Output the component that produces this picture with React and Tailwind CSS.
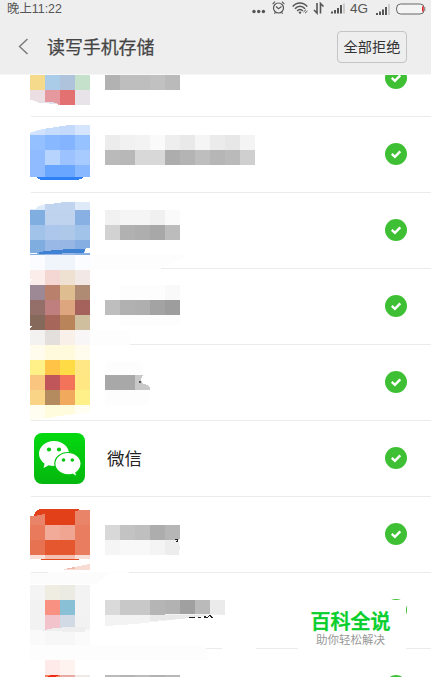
import React from 'react'

// Each entry is one line of 15px blocks: [x, y, colours, height]
const rows = [
    {
        top: 41,
        icon: [
            [30, 75, ['#f5da8b', '#abcce8', '#b0c3dc', '#c5e1cb']],
            [30, 90, ['#ebdfe3', '#e5989e', '#e37172', '#e8e3e8']],
        ],
        label: [[105, 75, ['#b2b2b2', '#bebebe', '#bebebe', '#c1c1c1', '#bababa'], 15]],
        marks: [['30,100 35,101 39,103 58,104 59,106 30,106', '#ffffff'], ['35,101 41,102 53,102 58,104 40,103', '#dfe2ec']],
    },
    {
        top: 117,
        icon: [
            [30, 125, ['#d0e2fd', '#c6dcfd', '#c3dafd', '#d5e5fe'], 10],
            [30, 135, ['#94c0ff', '#88b8ff', '#84b4ff', '#96c2ff']],
            [30, 150, ['#90bcff', '#b7d4ff', '#9cc3ff', '#a7caff']],
            [30, 165, ['#90bcff', '#68a6ff', '#68a6ff', '#88b8ff'], 12],
        ],
        label: [
            [105, 135, ['#ececec', '#f1f1f1', '#f3f3f3', '#fafafa', '#eeeeee', '#e9e9e9', '#f5f5f5', '#ebebeb', '#e7e7e7', '#f4f4f4']],
            [105, 150, ['#bababa', '#b8b8b8', '#d8d8d8', '#d8d8d8', '#adadad', '#b4b4b4', '#bebebe', '#b6b6b6', '#bababa', '#cfcfcf']],
        ],
        marks: [['30,125 69,125 56,127 43,129 35,131 30,133', '#ffffff'], ['36,177 84,177 81,179 77,180 41,180', '#2e80f5']],
    },
    {
        top: 193,
        icon: [
            [30, 202, ['#deeaf8', '#c0d4f0', '#c0d4f0', '#deeaf8'], 8],
            [30, 210, ['#80aee0', '#bfd3ef', '#bfd3ef', '#88b0e2']],
            [30, 225, ['#a2c3e9', '#acc6ec', '#aec8ea', '#a2c3e9']],
            [30, 240, ['#7fade0', '#99b8e6', '#98b6e4', '#85afe2']],
            [30, 255, ['#fafcff', '#f0f5fb', '#f0f5fb', '#fafcff']],
        ],
        label: [
            [105, 210, ['#f1f1f1', '#f5f5f5', '#f5f5f5', '#f0f0f0', '#fafafa']],
            [105, 225, ['#d2d2d2', '#b1b1b1', '#aeaeae', '#a8a8a8', '#bcbcbc']],
        ],
        marks: [
            ['30,202 61,202 61,203 46,204 39,206 35,209 30,209', '#ffffff'],
            ['37,253 45,251 69,249 85,249 84,253 40,254', '#3f82d4'],
            ['86,248 90,248 90,253 84,253', '#ffffff'],
            ['30,253 37,253 37,254 30,254', '#ffffff'],
            ['90,255 190,255 158,270 90,270', '#fdfdfd'],
        ],
    },
    {
        top: 269,
        icon: [
            [30, 270, ['#fbedea', '#f4d6d3', '#eee1d2', '#f2e8e5']],
            [30, 285, ['#9c8995', '#b9806b', '#debe91', '#af8b74']],
            [30, 300, ['#946e68', '#bf7f7e', '#dda67e', '#a5625d']],
            [30, 315, ['#85695b', '#a66659', '#b98459', '#cfbf9f']],
            [30, 330, ['#f3f2f1', '#e3dfdd', '#faf0ea', '#f8f6f7']],
        ],
        label: [
            [120, 285, ['#fdfdfd', '#fdfdfd', '#fdfdfd', '#f9f9f9']],
            [105, 300, ['#bebebe', '#b1b1b1', '#afafaf', '#a3a3a3', '#9d9d9d']],
            [120, 315, ['#fdfdfd', '#fdfdfd', '#fdfdfd', '#fdfdfd'], 11],
        ],
        marks: [['30,279 32,279 30,281', '#ffffff'], ['30,326 32,326 30,328', '#ffffff'], ['90,330 130,330 130,345 90,345', '#fdfdfd']],
    },
    {
        top: 345,
        icon: [
            [30, 345, ['#fffced', '#fffadc', '#fffadc', '#fffced']],
            [30, 360, ['#fff087', '#ffc348', '#ffdb45', '#ffe786']],
            [30, 375, ['#f9c57f', '#c05659', '#f27359', '#ffe884']],
            [30, 390, ['#fad486', '#b48a5f', '#f0a95d', '#fff08a']],
            [30, 405, ['#fffef0', '#fffbdd', '#fffbdd', '#fffef0']],
        ],
        label: [[105, 375, ['#a8a8a8', '#a8a8a8']]],
        marks: [
            ['90,412 90,420 35,420 60,416', '#ffffff'],
            ['105,361 138,361 143,366 143,375 105,375', '#fdfdfd'],
            ['105,390 150,390 149,402 143,405 105,405', '#fdfdfd'],
            ['135,375 143,375 141,379 142,383 147,385 150,388 150,390 135,390', '#c8c8c8'],
            ['139,381 141,381 141,383 139,383', '#555555'],
        ],
    },
    { top: 421, name: '微信' },
    {
        top: 497,
        icon: [
            [30, 510, ['#ea8468', '#e24019', '#e24019', '#ea8468']],
            [30, 525, ['#e97b5c', '#f1ab98', '#f0a592', '#e97d60']],
            [30, 540, ['#e67252', '#e5582f', '#e5582f', '#e87e5f']],
            [30, 555, ['#fadfd8', '#f4c0b2', '#f4c0b2', '#fadfd8'], 4],
        ],
        label: [
            [105, 525, ['#d8d8d8', '#c3c3c3', '#bfbfbf', '#adadad', '#b6b6b6']],
            [105, 540, ['#f5f5f5', '#f8f8f8', '#f8f8f8', '#f4f4f4', '#ededed']],
        ],
        marks: [
            ['30,509 45,509 45,514 30,516', '#ffffff'],
            ['34,516 35,513 37,510 41,509 77,509 81,510 75,511 75,514 45,514', '#e24019'],
            ['39,559 80,559 78,560 42,560', '#e24a20'],
            ['180,538 178,541 180,546 179,555 181,555 181,538', '#ffffff'],
            ['172,539 177,539 178,538 178,542 176,542 177,540', '#222222'],
            ['48,572 129,572 129,573 48,573', '#fdfdfd'],
            ['64,569 75,567 84,565 90,564 90,570 64,570', '#f8dcd4'],
            ['64,569 75,567 75,569', '#f2b9aa'],
        ],
    },
    {
        top: 573,
        icon: [
            [30, 585, ['#f4f4f4', '#efece1', '#ecebe3', '#f3f3f3']],
            [30, 600, ['#f2f2f2', '#f99182', '#8ac0d6', '#f3f3f3']],
            [30, 615, ['#f2f2f2', '#f2c3ca', '#d2dae5', '#f2f2f2']],
            [30, 630, ['#fafafa', '#f7f7f7', '#f7f7f7', '#fbfbfb']],
            [30, 645, ['#fdfdfd', '#fdfdfd', '#fdfdfd', '#fdfdfd']],
        ],
        label: [[105, 600, ['#dadada', '#c8c8c8', '#c8c8c8', '#b5b5b5', '#b2b2b2', '#a0a0a0', '#bababa', '#ebebeb']]],
        marks: [
            ['30,573 110,573 96,584 30,584', '#fcfcfc'],
            ['45,630 54,628 69,627 86,627 85,632 38,631', '#eeeeee'],
            ['105,615 225,614 180,619 135,624 105,626', '#f3f3f3'],
            ['150,615 210,615 180,619 150,621', '#e9e9e9'],
            ['189,617 195,617 195,618 189,618', '#222222'],
            ['198,617 201,617 201,618 198,618', '#222222'],
            ['204,616 207,617 210,615 213,618 211,618 209,616 207,618 204,618', '#222222'],
            ['90,645 200,645 208,650 208,660 90,660', '#fdfdfd'],
            ['222,647 256,647 256,650 222,650', '#ffffff'],
        ],
    },
    {
        top: 649,
        icon: [
            [45, 660, ['#feebe9', '#fff3f0']],
            [45, 675, ['#f3805f', '#e8aaa5', '#efe8e5'], 2],
        ],
        label: [[105, 675, ['#bababa', '#b4b4b4', '#bcbcbc', '#b2b2b2', '#b8b8b8'], 2]],
        marks: [['48,676 51,675 58,675 58,676 54,677 48,677', '#f02a12']],
    },
]

function Mosaic({ row }) {
    return (
        <svg className="h-[76px] w-[240px] shrink-0 overflow-visible" viewBox={`30 ${row.top} 240 76`} shapeRendering="crispEdges">
            {[...row.icon, ...row.label].map(([x, y, colors, height = 15]) =>
                colors.map((color, i) => (
                    <rect key={`${x}-${y}-${i}`} x={x + i * 15} y={y} width="15" height={height} fill={color} />
                ))
            )}
            {row.marks.map(([points, fill]) => (
                <polygon key={points} points={points} fill={fill} />
            ))}
        </svg>
    )
}

function WeChatIcon() {
    return (
        <svg className="h-[51px] w-[51px]" viewBox="0 0 51 51">
            <defs>
                <linearGradient id="wechat" x1="0" y1="0" x2="0" y2="1">
                    <stop offset="0" stopColor="#04d910" />
                    <stop offset="1" stopColor="#05b70e" />
                </linearGradient>
            </defs>
            <rect width="51" height="51" rx="8" fill="url(#wechat)" />
            <path d="M20 8C11.500 8 5 13.700 5 20.800c0 4 2.200 7.500 5.600 9.900L9.500 35l5.300-2.700c1.700.5 3.400.8 5.200.8 8.300 0 15-5.600 15-12.500S28.300 8 20 8z" fill="#fff" />
            <path d="M34 19.500c-7.300 0-13.200 4.900-13.200 11.100S26.700 41.800 34 41.800c1.500 0 3-.2 4.300-.6l4.700 2.500-1.100-4c3.200-2 5.200-5.300 5.200-9.100 0-6.200-5.800-11.100-13.100-11.100z" fill="#fff" stroke="#05c60f" strokeWidth="1.200" />
            <circle cx="15" cy="16.500" r="2.100" fill="#04cc10" />
            <circle cx="25" cy="16.500" r="2.100" fill="#04cc10" />
            <circle cx="29.500" cy="27" r="1.800" fill="#04c40f" />
            <circle cx="38.300" cy="27" r="1.800" fill="#04c40f" />
        </svg>
    )
}

function CheckIcon() {
    return (
        <svg className="h-[22px] w-[22px]" viewBox="0 0 22 22">
            <circle cx="11" cy="11" r="11" fill="#3fc034" />
            <path d="M6.800 10.900l3.100 3 5.400-5.600" fill="none" stroke="#fff" strokeWidth="2.400" />
        </svg>
    )
}

function Signal({ className }) {
    return (
        <svg className={className} viewBox="0 0 14 11">
            <path d="M0 11V9h2v2zM3 11V7.500h2V11zM6 11V5.500h2V11zM9 11V3h2v8z" fill="#555" />
            <path d="M12 11V0h2v11z" fill="#ccc" />
        </svg>
    )
}

function StatusBar() {
    return (
        <div className="flex h-[18px] items-center justify-between pl-[7px] pr-[5px] text-[12.400px] leading-none text-[#555]">
            <span>晚上11:22</span>
            <div className="flex items-center">
                <svg className="h-[18px] w-[94px]" viewBox="252 0 94 18" fill="none" stroke="#555">
                    <g fill="#555" stroke="none">
                        <circle cx="254" cy="11.500" r="1.700" />
                        <circle cx="258.700" cy="11.500" r="1.700" />
                        <circle cx="263.400" cy="11.500" r="1.700" />
                    </g>
                    <circle cx="278.500" cy="8" r="5" strokeWidth="1.200" />
                    <path d="M276 6.500l2.500 2.200 3-2.200M272.600 4.200l2.500-2.500M284.400 4.200l-2.500-2.500M275.500 12.300l-1.200 1.400M281.500 12.300l1.200 1.400" strokeWidth="1.100" />
                    <path d="M292.700 6.500c4-4.700 10.500-4.700 14.500 0M295 8.700c3-3.300 7-3.300 10 0M297.200 10.900c1.700-1.700 3.900-1.700 5.600 0" strokeWidth="1.600" />
                    <circle cx="300" cy="12.600" r="1.200" fill="#555" stroke="none" />
                    <path d="M303.500 12l2.500-2.300M305 13.200l2.500-2.300" strokeWidth="1" />
                    <path d="M317 3v10l-3-3M320.500 13.500V3.500l3 3" strokeWidth="1.600" />
                    <g stroke="none">
                        <path d="M331 13.500v-2h2v2zM334 13.500v-3.500h2v3.500zM337 13.500v-5.500h2v5.500zM340 13.500V5h2v8.500z" fill="#555" />
                        <path d="M343 13.500V3.500h2v10z" fill="#ccc" />
                    </g>
                </svg>
                <span className="ml-1 mb-px w-[26px] text-[13.500px]">4G</span>
                <Signal className="h-[11px] w-[14px]" />
                <svg className="ml-1.5 mb-px h-[12px] w-[30px]" viewBox="0 0 30 12">
                    <rect x="0.600" y="1" width="27.500" height="10" rx="4" fill="#f4f4f4" stroke="#666" />
                    <path d="M26 3.500h1.500v5H26z" fill="#f02020" />
                    <path d="M28.800 4v4" stroke="#888" />
                </svg>
            </div>
        </div>
    )
}

function Row({ row }) {
    return (
        <div className="flex h-[76px] items-start justify-between bg-[linear-gradient(#ebebeb,#ebebeb)] bg-[length:400px_1px] bg-[position:31px_75px] bg-no-repeat pl-[30px] pr-6">
            {row.name ? (
                <div className="flex items-center pl-1 pt-3">
                    <WeChatIcon />
                    <span className="ml-[22px] pt-0.5 text-[17.500px] text-[#222]">{row.name}</span>
                </div>
            ) : (
                <Mosaic row={row} />
            )}
            <div className="pt-[26px]">
                <CheckIcon />
            </div>
        </div>
    )
}

function App() {
    return (
        <div className="relative h-[677px] w-[431px] overflow-hidden bg-white font-['Liberation_Sans','Noto_Sans_CJK_SC',sans-serif]">
            <header className="relative z-10 h-[75px] border-b border-[#f6f6f6] bg-[#eeeeee]">
                <StatusBar />
                <div className="flex items-center pl-[18px] pr-6 pt-[13px]">
                    <svg className="h-[18px] w-[11px]" viewBox="0 0 11 18" fill="none" stroke="#777" strokeWidth="1.400">
                        <path d="M9.500 1L1.500 8.500l8 7.500" />
                    </svg>
                    <h1 className="ml-[18px] flex-1 pt-[3px] text-[17.900px] text-[#444] [-webkit-text-stroke:0.250px_#444]">读写手机存储</h1>
                    <button className="h-8 w-[70px] rounded border border-[#c4c4c4] pt-px text-[14.200px] leading-none whitespace-nowrap text-[#333]">全部拒绝</button>
                </div>
            </header>
            <main className="-mt-[34px]">
                {rows.map((row) => (
                    <Row key={row.top} row={row} />
                ))}
            </main>
            <div className="absolute left-[298px] top-[600px] flex h-[72px] w-[108px] flex-col items-center bg-white pt-[10px] pr-[3px]">
                <strong className="text-[20px] leading-[24px] font-medium text-[#05cf2a] [-webkit-text-stroke:0.500px_#05cf2a]">百科全说</strong>
                <span className="text-[11.500px] leading-[13px] text-[#999]">助你轻松解决</span>
            </div>
        </div>
    )
}

export default App
